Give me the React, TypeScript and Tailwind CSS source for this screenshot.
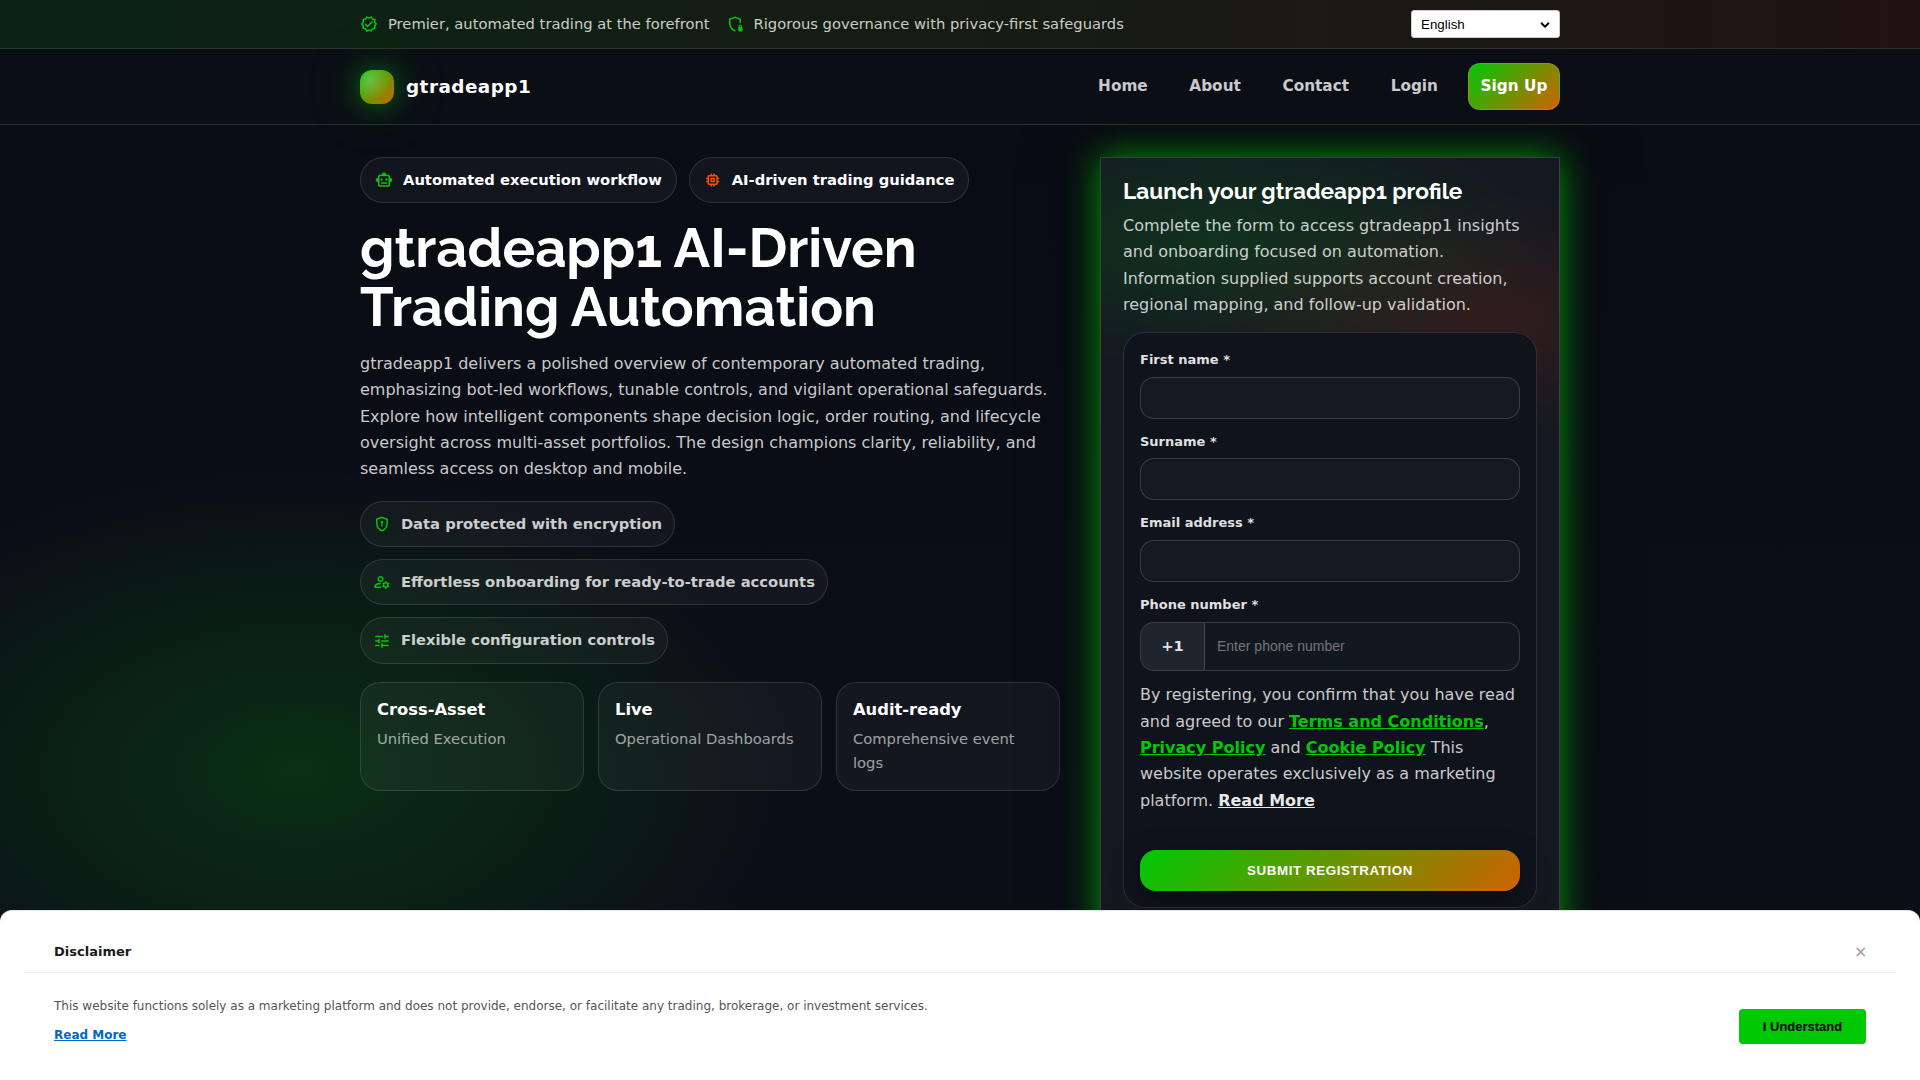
import type { ReactNode } from "react";
import { MdOutlineVerified, MdOutlineSmartToy, MdMemory, MdTune, MdOutlineManageAccounts } from "react-icons/md";
import { ChevronDown } from "lucide-react";

function ShieldLockCorner() {
  return (
    <svg viewBox="0 0 24 24" className="size-[18px] text-[#00c805]" fill="currentColor">
      <path d="M12 22q-3.475-.875-5.738-3.988T4 11.1V5l8-3 8 3v5.7h-2V6.375l-6-2.25-6 2.25V11.1q0 3.025 1.7 5.5t4.3 3.3q.35-.1.7-.28v2.1q-.35.2-.7.28m4.3-1V17q0-.5.35-.85v-.75q0-1 .75-1.7t1.6-.7 1.6.7.75 1.7v.75q.65.35.65.85v4q0 1-1 1h-3.700q-1 0-1-1m1.700-5h2v-.7q0-.5-.3-.75T19 14.2t-.7.35-.3.75z" />
    </svg>
  );
}

function ShieldKeyhole() {
  return (
    <svg viewBox="0 0 24 24" className="size-[18px] text-[#00c805]" fill="currentColor">
      <path d="M11 15.500h2l-.300-4.200q.500-.2.800-.600t.300-.900q0-.75-.525-1.275T12 8t-1.275.525T10.200 9.800q0 .5.300.900t.800.600zm1 6.500q-3.475-.875-5.738-3.988T4 11.100V5l8-3 8 3v6.100q0 3.800-2.262 6.913T12 22m0-2.100q2.600-.825 4.300-3.300t1.700-5.500V6.375l-6-2.250-6 2.250V11.100q0 3.025 1.700 5.500t4.300 3.300" />
    </svg>
  );
}

function Chip({ icon, children, width }: { icon: ReactNode; children: ReactNode; width: string }) {
  return (
    <div className={`flex h-[46.3px] items-center gap-[10px] rounded-full border border-white/12 bg-white/4 px-[14px] text-[14.72px] leading-[24.3px] font-bold text-white ${width}`}>
      {icon}
      <span className="whitespace-nowrap">{children}</span>
    </div>
  );
}

function Feature({ icon, children, width }: { icon: ReactNode; children: ReactNode; width: string }) {
  return (
    <li className={`flex h-[46.3px] items-center gap-[10px] rounded-full border border-white/12 bg-white/4 px-3 text-[14.72px] leading-[24.3px] font-bold text-white/78 ${width}`}>
      {icon}
      <span className="whitespace-nowrap">{children}</span>
    </li>
  );
}

function Stat({ title, text }: { title: string; text: string }) {
  return (
    <div className="h-[109px] rounded-[20px] border border-white/12 bg-white/4 px-4 py-[14px]">
      <div className="text-[16.32px] leading-[26px] font-bold text-white">{title}</div>
      <div className="mt-1 text-[14.72px] leading-[24px] text-white/60">{text}</div>
    </div>
  );
}

function Field({ label }: { label: string }) {
  return (
    <label className="mb-[11.95px] block">
      <span className="mb-[6.3px] block text-[13px] leading-[21.45px] font-bold text-white/88">{label}</span>
      <input className="block h-[42px] w-full rounded-[14px] border border-white/16 bg-[#8cc8d2]/4" />
    </label>
  );
}

const heading = "font-['Raleway','Lato',sans-serif] font-bold text-white";
const nav = ["Home", "About", "Contact", "Login"];

export default function App() {
  return (
    <div className="relative h-[1080px] w-full overflow-hidden bg-[radial-gradient(ellipse_500px_300px_at_298px_770px,rgba(0,200,5,0.18),transparent),linear-gradient(180deg,#0a0c14,#0c0f18)] font-['DejaVu_Sans',sans-serif] text-base text-white/78">
      <div className="relative h-[49px] border-b border-white/10 bg-[#0b0d14] bg-[linear-gradient(90deg,rgba(0,200,5,0.12),rgba(255,80,0,0.09))]">
        <div className="mx-auto flex h-full w-[1200px] items-center text-[14.72px]">
          <MdOutlineVerified className="size-[18px] text-[#00c805]" />
          <span className="ml-[10px] pt-px whitespace-nowrap">Premier, automated trading at the forefront</span>
          <span className="ml-[16px]"><ShieldLockCorner /></span>
          <span className="ml-[10px] pt-px whitespace-nowrap">Rigorous governance with privacy-first safeguards</span>
          <div className="ml-auto flex h-7 w-[149px] items-center justify-between rounded-[3px] border border-[#ccc] bg-white pt-px pr-[7px] pl-[9px] font-['Liberation_Sans',sans-serif] text-[13.33px] text-black">
            English
            <ChevronDown className="size-[14px]" strokeWidth={3.2} />
          </div>
        </div>
      </div>

      <header className="relative z-10 h-[76px] border-b border-white/12 bg-[#0c0e16]">
        <div className="mx-auto flex h-full w-[1200px] items-center">
          <div className="size-[34px] rounded-[12px] bg-[radial-gradient(circle_at_30%_30%,rgba(255,255,255,0.25),transparent_60%),linear-gradient(135deg,#00c805,#cc6600)] shadow-[0_0_24px_rgba(0,200,5,0.45),0_0_56px_rgba(0,200,5,0.25)]" />
          <div className="ml-3 text-[18.4px] font-bold tracking-[0.025em] text-white">gtradeapp1</div>
          <nav className="ml-auto flex items-center text-[15.3px] font-bold">
            {nav.map((n) => (
              <a key={n} className="mr-[41.6px] last-of-type:mr-0">{n}</a>
            ))}
          </nav>
          <a className="ml-[30px] flex h-[47px] w-[92px] items-center justify-center rounded-[12px] border border-white/12 bg-[linear-gradient(135deg,#00c805,#d06200)] text-[15.3px] font-bold whitespace-nowrap text-white">Sign Up</a>
        </div>
      </header>

      <main className="mx-auto grid w-[1200px] grid-cols-[700px_460px] gap-10 pt-8">
        <section>
          <div className="flex gap-3">
            <Chip width="w-[317.4px]" icon={<MdOutlineSmartToy className="size-[18px] text-[#00c805]" />}>Automated execution workflow</Chip>
            <Chip width="w-[280px]" icon={<MdMemory className="size-[18px] text-[#ff5000]" />}>AI-driven trading guidance</Chip>
          </div>
          <h1 className={`mt-[15.7px] text-[54.4px] leading-[58.75px] ${heading}`}>
            <span className="block whitespace-nowrap">gtradeapp1 AI-Driven</span>
            <span className="block whitespace-nowrap">Trading Automation</span>
          </h1>
          <p className="mt-[14.25px] leading-[26.4px]">
            gtradeapp1 delivers a polished overview of contemporary automated trading, emphasizing bot-led workflows, tunable controls, and vigilant operational safeguards. Explore how intelligent components shape decision logic, order routing, and lifecycle oversight across multi-asset portfolios. The design champions clarity, reliability, and seamless access on desktop and mobile.
          </p>
          <ul className="mt-[18px] flex flex-col gap-3">
            <Feature width="w-[315px]" icon={<ShieldKeyhole />}>Data protected with encryption</Feature>
            <Feature width="w-[468px]" icon={<MdOutlineManageAccounts className="size-[18px] text-[#00c805]" />}>Effortless onboarding for ready-to-trade accounts</Feature>
            <Feature width="w-[308px]" icon={<MdTune className="size-[18px] text-[#00c805]" />}>Flexible configuration controls</Feature>
          </ul>
          <div className="mt-[18.25px] grid grid-cols-3 gap-[14px]">
            <Stat title="Cross-Asset" text="Unified Execution" />
            <Stat title="Live" text="Operational Dashboards" />
            <Stat title="Audit-ready" text="Comprehensive event logs" />
          </div>
        </section>

        <section className="h-[1000px] border border-white/16 bg-[#141821] bg-[radial-gradient(ellipse_330px_130px_at_115px_82px,rgba(0,200,5,0.15),transparent),radial-gradient(ellipse_300px_125px_at_385px_160px,rgba(255,60,0,0.12),transparent)] px-[22px] pt-[19px] shadow-[0_0_34px_rgba(0,200,5,0.75),0_0_60px_20px_rgba(0,0,0,0.3)]">
          <h2 className={`text-[22.6px] leading-[28px] whitespace-nowrap ${heading}`}>Launch your gtradeapp1 profile</h2>
          <p className="mt-[8px] leading-[26.4px]">
            Complete the form to access gtradeapp1 insights and onboarding focused on automation. Information supplied supports account creation, regional mapping, and follow-up validation.
          </p>
          <form className="mt-[13px] h-[576px] rounded-[22px] border border-white/12 bg-[#0f121a]/88 px-4 pt-[16.4px]">
            <Field label="First name *" />
            <Field label="Surname *" />
            <Field label="Email address *" />
            <span className="mb-[6px] block text-[13px] leading-[21.45px] font-bold text-white/88">Phone number *</span>
            <div className="flex h-[49px] overflow-hidden rounded-[14px] border border-white/16 bg-[#8cc8d2]/3">
              <span className="flex w-16 items-center justify-center border-r border-white/16 bg-white/6 text-[14.72px] leading-[24.3px] font-bold text-white/88">+1</span>
              <input className="flex-1 px-3 pt-px font-['Liberation_Sans',sans-serif] text-[14px] placeholder:text-[#757575]" placeholder="Enter phone number" />
            </div>
            <p className="mt-[11.7px] leading-[26.4px]">
              By registering, you confirm that you have read and agreed to our <a className="font-bold text-[#00c805] underline">Terms and Conditions</a>, <a className="font-bold text-[#00c805] underline">Privacy Policy</a> and <a className="font-bold text-[#00c805] underline">Cookie Policy</a> This website operates exclusively as a marketing platform. <a className="font-bold text-white/92 underline">Read More</a>
            </p>
            <button className="mt-[35.7px] h-[41px] w-full rounded-[16px] bg-[linear-gradient(135deg,#00c805,#d06200)] pt-px font-['Liberation_Sans',sans-serif] text-[13.33px] font-bold tracking-[0.6px] text-white shadow-[0_10px_30px_rgba(0,0,0,0.35)]">SUBMIT REGISTRATION</button>
          </form>
        </section>
      </main>

      <aside className="absolute inset-x-0 bottom-0 z-30 h-[170px] rounded-t-[12px] border-t border-[#e5e5e5] bg-white px-[25px] pt-[20px]">
        <div className="flex h-[42px] items-center justify-between border-b border-[#eee] px-[29px]">
          <strong className="text-[13px] text-[#1a1a1a]">Disclaimer</strong>
          <span className="-mr-[1.5px] text-base text-[#999]">×</span>
        </div>
        <div className="flex justify-between px-[29px]">
          <div className="pt-[23px] text-[12px] text-[#555]">
            <p className="leading-[20px]">This website functions solely as a marketing platform and does not provide, endorse, or facilitate any trading, brokerage, or investment services.</p>
            <a className="mt-[9px] block leading-[20px] font-bold text-[#0066cc] underline">Read More</a>
          </div>
          <button className="mt-[36px] h-[35px] w-[127px] rounded-[4px] bg-[#00c805] font-['Liberation_Sans',sans-serif] text-[13px] font-bold text-black">I Understand</button>
        </div>
      </aside>
    </div>
  );
}
